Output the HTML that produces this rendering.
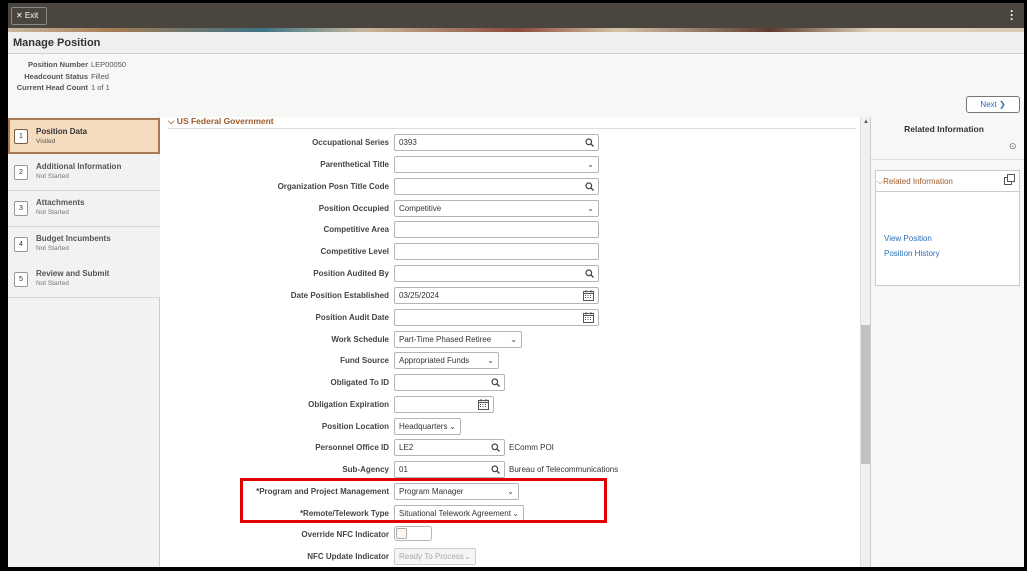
<!DOCTYPE html>
<html><head><meta charset="utf-8"><style>
*{box-sizing:border-box;margin:0;padding:0}
body{width:1032px;height:571px;background:#fff;font-family:"Liberation Sans",Arial,sans-serif;position:relative;overflow:hidden;font-size:8px;color:#333}
.a{position:absolute}
.frame{background:#000}
.lbl{position:absolute;right:643px;font-weight:bold;font-size:8px;color:#444;text-align:right;white-space:nowrap}
.inp{position:absolute;left:394px;height:17px;border:1px solid #b5b5b5;border-radius:2px;background:#fff;font-size:8px;padding:3px 4px;color:#333;white-space:nowrap}
.ic{position:absolute;right:4px;top:3px;font-size:8px;color:#444}
.ic svg{display:block}
.step{position:absolute;left:8px;width:152px;height:36px;border-bottom:1px solid #d8d8d8;background:#f3f2f1}
.step .n{position:absolute;left:6px;top:10px;width:14px;height:15px;border:1px solid #999;border-radius:2px;background:#fff;font-size:7px;text-align:center;line-height:13px}
.step .t{position:absolute;left:28px;top:7px;font-weight:bold;font-size:8px;color:#555}
.step .s{position:absolute;left:28px;top:18px;font-size:6.5px;color:#777}
</style></head><body>
<div class="a" style="left:8px;top:3px;width:1017px;height:25px;background:#4b4540"></div>
<div class="a" style="left:8px;top:28px;width:1017px;height:4px;background:linear-gradient(90deg,#c9b9a0,#a67c52 10%,#3d7385 25%,#c8b79c 35%,#8a4a3a 50%,#d4c4a8 60%,#5c3b30 75%,#e0d4bc 85%,#d8ccb4)"></div>
<div class="a" style="left:11px;top:7px;width:36px;height:18px;border:1px solid #888;border-radius:2px;color:#fff;font-size:8px;line-height:16px;padding-left:4px">✕ Exit</div>
<div class="a" style="left:1010px;top:9px;color:#fff;font-size:12px;line-height:4px;font-weight:bold">·<br>·<br>·</div>
<div class="a" style="left:8px;top:32px;width:1017px;height:22px;background:#f0efed;border-bottom:1px solid #d0d0d0"></div>
<div class="a" style="left:13px;top:37px;font-size:11px;font-weight:bold;color:#333">Manage Position</div>
<div class="a" style="left:8px;top:54px;width:1017px;height:63px;background:#f7f7f6"></div>
<div class="a" style="left:12px;top:59px;font-size:7.5px;line-height:11.5px;text-align:right;width:76px;font-weight:bold;color:#555">Position Number<br>Headcount Status<br>Current Head Count</div>
<div class="a" style="left:91px;top:59px;font-size:7.5px;line-height:11.5px;color:#555">LEP00050<br>Filled<br>1 of 1</div>
<div class="a" style="left:966px;top:96px;width:54px;height:17px;border:1px solid #777;border-radius:3px;background:#fff;color:#2a6ebb;font-size:8px;text-align:center;line-height:15px">Next ❯</div>
<div class="a" style="left:8px;top:117px;width:152px;height:450px;background:#f3f2f1;border-right:1px solid #ccc"></div>
<div class="step" style="top:118px;height:36px;background:#f5dcbf;border:2px solid #a77a55"><div class="n" style="left:4px;top:9px;border-color:#7a5a40">1</div><div class="t" style="left:26px;top:7px;color:#333">Position Data</div><div class="s" style="left:26px;top:18px;color:#555">Visited</div></div>
<div class="step" style="top:155px"><div class="n">2</div><div class="t">Additional Information</div><div class="s">Not Started</div></div>
<div class="step" style="top:191px"><div class="n">3</div><div class="t">Attachments</div><div class="s">Not Started</div></div>
<div class="step" style="top:227px"><div class="n">4</div><div class="t">Budget Incumbents</div><div class="s">Not Started</div></div>
<div class="step" style="top:262px"><div class="n">5</div><div class="t">Review and Submit</div><div class="s">Not Started</div></div>
<div class="a" style="left:168px;top:116px;font-size:8.5px;font-weight:bold;color:#9c5a2a">⌵ US Federal Government</div>
<div class="a" style="left:168px;top:128px;width:688px;height:1px;background:#ddd"></div>
<div class="a" style="left:860px;top:117px;width:11px;height:450px;background:#f0f0f0;border-left:1px solid #e0e0e0;border-right:1px solid #ccc"></div>
<div class="a" style="left:861px;top:325px;width:9px;height:139px;background:#c1c1c1"></div>
<div class="a" style="left:863px;top:119px;font-size:6px;color:#555">▲</div>
<div class="a" style="left:871px;top:117px;width:154px;height:450px;background:#f7f7f6"></div>
<div class="a" style="left:871px;top:124px;width:146px;text-align:center;font-size:8.5px;font-weight:bold;color:#333">Related Information</div>
<div class="a" style="left:1009px;top:141px;font-size:9px;color:#666">⊙</div>
<div class="a" style="left:871px;top:159px;width:154px;height:1px;background:#ddd"></div>
<div class="a" style="left:875px;top:170px;width:145px;height:116px;border:1px solid #ccc;background:#fff"></div>
<div class="a" style="left:876px;top:171px;width:143px;height:21px;border-bottom:1px solid #ccc"></div>
<div class="a" style="left:877px;top:177px;font-size:8px;color:#9c5a2a">⌵Related Information</div>
<svg class="a" style="left:1004px;top:174px" width="11" height="11"><rect x="3.5" y="0.5" width="7" height="7" fill="none" stroke="#555"/><path d="M3.5 3.5H0.5V10.5H7.5V7.5" fill="none" stroke="#555"/></svg>
<div class="a" style="left:884px;top:234px;font-size:8px;color:#2a6ebb">View Position</div>
<div class="a" style="left:884px;top:249px;font-size:8px;color:#2a6ebb">Position History</div>
<div class="lbl" style="top:138px">Occupational Series</div><div class="inp" style="top:134px;width:205px">0393<span class="ic"><svg width="9" height="9"><circle cx="3.8" cy="3.8" r="2.8" fill="none" stroke="#444" stroke-width="1.2"/><path d="M6 6L8.5 8.5" stroke="#444" stroke-width="1.3"/></svg></span></div>
<div class="lbl" style="top:160px">Parenthetical Title</div><div class="inp" style="top:156px;width:205px"><span class="ic">⌄</span></div>
<div class="lbl" style="top:182px">Organization Posn Title Code</div><div class="inp" style="top:178px;width:205px"><span class="ic"><svg width="9" height="9"><circle cx="3.8" cy="3.8" r="2.8" fill="none" stroke="#444" stroke-width="1.2"/><path d="M6 6L8.5 8.5" stroke="#444" stroke-width="1.3"/></svg></span></div>
<div class="lbl" style="top:204px">Position Occupied</div><div class="inp" style="top:200px;width:205px">Competitive<span class="ic">⌄</span></div>
<div class="lbl" style="top:225px">Competitive Area</div><div class="inp" style="top:221px;width:205px"></div>
<div class="lbl" style="top:247px">Competitive Level</div><div class="inp" style="top:243px;width:205px"></div>
<div class="lbl" style="top:269px">Position Audited By</div><div class="inp" style="top:265px;width:205px"><span class="ic"><svg width="9" height="9"><circle cx="3.8" cy="3.8" r="2.8" fill="none" stroke="#444" stroke-width="1.2"/><path d="M6 6L8.5 8.5" stroke="#444" stroke-width="1.3"/></svg></span></div>
<div class="lbl" style="top:291px">Date Position Established</div><div class="inp" style="top:287px;width:205px">03/25/2024<span class="ic" style="top:2px"><svg width="11" height="11"><rect x="0.5" y="1.5" width="10" height="9" fill="none" stroke="#555"/><path d="M0.5 3.5H10.5M3 0V2.5M8 0V2.5" stroke="#555"/><path d="M2 5.5h1M4.5 5.5h1M7 5.5h1M2 7.5h1M4.5 7.5h1M7 7.5h1" stroke="#555"/></svg></span></div>
<div class="lbl" style="top:313px">Position Audit Date</div><div class="inp" style="top:309px;width:205px"><span class="ic" style="top:2px"><svg width="11" height="11"><rect x="0.5" y="1.5" width="10" height="9" fill="none" stroke="#555"/><path d="M0.5 3.5H10.5M3 0V2.5M8 0V2.5" stroke="#555"/><path d="M2 5.5h1M4.5 5.5h1M7 5.5h1M2 7.5h1M4.5 7.5h1M7 7.5h1" stroke="#555"/></svg></span></div>
<div class="lbl" style="top:335px">Work Schedule</div><div class="inp" style="top:331px;width:128px">Part-Time Phased Retiree<span class="ic">⌄</span></div>
<div class="lbl" style="top:356px">Fund Source</div><div class="inp" style="top:352px;width:105px">Appropriated Funds<span class="ic">⌄</span></div>
<div class="lbl" style="top:378px">Obligated To ID</div><div class="inp" style="top:374px;width:111px"><span class="ic"><svg width="9" height="9"><circle cx="3.8" cy="3.8" r="2.8" fill="none" stroke="#444" stroke-width="1.2"/><path d="M6 6L8.5 8.5" stroke="#444" stroke-width="1.3"/></svg></span></div>
<div class="lbl" style="top:400px">Obligation Expiration</div><div class="inp" style="top:396px;width:100px"><span class="ic" style="top:2px"><svg width="11" height="11"><rect x="0.5" y="1.5" width="10" height="9" fill="none" stroke="#555"/><path d="M0.5 3.5H10.5M3 0V2.5M8 0V2.5" stroke="#555"/><path d="M2 5.5h1M4.5 5.5h1M7 5.5h1M2 7.5h1M4.5 7.5h1M7 7.5h1" stroke="#555"/></svg></span></div>
<div class="lbl" style="top:422px">Position Location</div><div class="inp" style="top:418px;width:67px">Headquarters<span class="ic">⌄</span></div>
<div class="lbl" style="top:443px">Personnel Office ID</div><div class="inp" style="top:439px;width:111px">LE2<span class="ic"><svg width="9" height="9"><circle cx="3.8" cy="3.8" r="2.8" fill="none" stroke="#444" stroke-width="1.2"/><path d="M6 6L8.5 8.5" stroke="#444" stroke-width="1.3"/></svg></span></div><div class="a" style="left:509px;top:443px;font-size:8px">EComm POI</div>
<div class="lbl" style="top:465px">Sub-Agency</div><div class="inp" style="top:461px;width:111px">01<span class="ic"><svg width="9" height="9"><circle cx="3.8" cy="3.8" r="2.8" fill="none" stroke="#444" stroke-width="1.2"/><path d="M6 6L8.5 8.5" stroke="#444" stroke-width="1.3"/></svg></span></div><div class="a" style="left:509px;top:465px;font-size:8px">Bureau of Telecommunications</div>
<div class="lbl" style="top:487px">*Program and Project Management</div><div class="inp" style="top:483px;width:125px">Program Manager<span class="ic">⌄</span></div>
<div class="lbl" style="top:509px">*Remote/Telework Type</div><div class="inp" style="top:505px;width:130px">Situational Telework Agreement<span class="ic">⌄</span></div>
<div class="lbl" style="top:530px">Override NFC Indicator</div><div class="inp" style="top:526px;width:38px;height:15px;border-radius:3px"><span class="a" style="left:1px;top:1px;width:11px;height:11px;border:1px solid #aaa;border-radius:2px;background:#fdf6ee"></span></div>
<div class="lbl" style="top:552px">NFC Update Indicator</div><div class="inp" style="top:548px;width:82px;color:#aaa;background:#f5f5f5;border-color:#ccc">Ready To Process<span class="ic" style="color:#aaa">⌄</span></div>
<div class="a" style="left:240px;top:478px;width:367px;height:45px;border:3px solid #e00000"></div>
<div class="a frame" style="left:0;top:0;width:8px;height:571px"></div>
<div class="a frame" style="left:0;top:0;width:1027px;height:3px"></div>
<div class="a frame" style="left:1024px;top:0;width:3px;height:571px"></div>
<div class="a frame" style="left:0;top:567px;width:1027px;height:4px"></div>
</body></html>
